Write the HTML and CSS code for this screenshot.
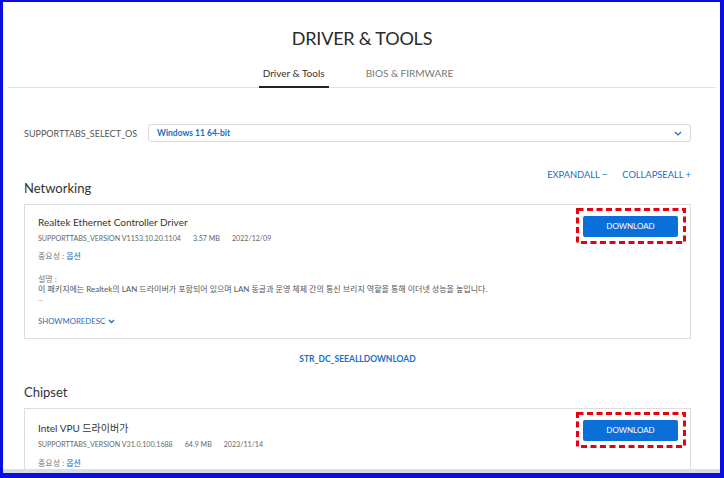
FILE: index.html
```html
<!DOCTYPE html>
<html lang="ko">
<head>
<meta charset="utf-8">
<title>Driver &amp; Tools</title>
<link rel="stylesheet" href="styles.css">
</head>
<body>
<div class="frame">
  <div class="viewport">
    <header class="head">
      <h1 class="title">DRIVER &amp; TOOLS</h1>
      <nav class="tabs">
        <span class="tab active">Driver &amp; Tools</span>
        <span class="tab">BIOS &amp; FIRMWARE</span>
      </nav>
    </header>

    <main class="page">
      <div class="os-row">
        <span class="os-label">SUPPORTTABS_SELECT_OS</span>
        <div class="select">
          <span class="select-value">Windows 11 64-bit</span>
          <svg class="chev" width="8" height="5" viewBox="0 0 8 5"><path d="M1 1l3 3 3-3" fill="none" stroke="#1b6ec2" stroke-width="1.2"/></svg>
        </div>
      </div>

      <div class="expand-row">
        <span class="link">EXPANDALL −</span>
        <span class="link">COLLAPSEALL +</span>
      </div>

      <h2 class="section">Networking</h2>
      <section class="card">
        <div class="card-head">
          <div class="card-info">
            <div class="card-title">Realtek Ethernet Controller Driver</div>
            <div class="meta"><span>SUPPORTTABS_VERSION V1153.10.20.1104</span><span>3.57 MB</span><span>2022/12/09</span></div>
          </div>
          <div class="btn-wrap">
            <span class="btn">DOWNLOAD</span>
            <svg class="mark" width="110" height="36" viewBox="0 0 110 36"><rect x="1.5" y="1.5" width="107" height="33" fill="none" stroke="#e60012" stroke-width="3" stroke-dasharray="6 3.5"/></svg>
          </div>
        </div>
        <div class="imp">중요성 : <span class="opt">옵션</span></div>
        <div class="desc-label">설명 :</div>
        <div class="desc">이 패키지에는 Realtek의 LAN 드라이버가 포함되어 있으며 LAN 동글과 운영 체제 간의 통신 브리지 역할을 통해 이더넷 성능을 높입니다.</div>
        <div class="dots">...</div>
        <div class="more link">SHOWMOREDESC <svg width="7" height="5" viewBox="0 0 7 5"><path d="M1 1l2.5 2.5L6 1" fill="none" stroke="#1b6ec2" stroke-width="1.3"/></svg></div>
      </section>

      <div class="seeall link">STR_DC_SEEALLDOWNLOAD</div>

      <h2 class="section chip">Chipset</h2>
      <section class="card card-2">
        <div class="card-head">
          <div class="card-info">
            <div class="card-title">Intel VPU 드라이버가</div>
            <div class="meta"><span>SUPPORTTABS_VERSION V31.0.100.1688</span><span>64.9 MB</span><span>2023/11/14</span></div>
          </div>
          <div class="btn-wrap">
            <span class="btn">DOWNLOAD</span>
            <svg class="mark" width="110" height="36" viewBox="0 0 110 36"><rect x="1.5" y="1.5" width="107" height="33" fill="none" stroke="#e60012" stroke-width="3" stroke-dasharray="6 3.5"/></svg>
          </div>
        </div>
        <div class="imp">중요성 : <span class="opt">옵션</span></div>
      </section>
    </main>
  </div>
  <div class="hscroll"></div>
</div>
</body>
</html>
```
FILE: styles.css
```css
* { box-sizing: border-box; }
html, body { margin: 0; padding: 0; }
body {
  width: 724px;
  height: 478px;
  overflow: hidden;
  font-family: "Lato", "Noto Sans CJK KR", sans-serif;
  color: #333;
  background: #fff;
}
.frame {
  width: 724px;
  height: 478px;
  border-style: solid;
  border-color: #0a0ee0;
  border-width: 2px 4px 5px 3px;
  display: flex;
  flex-direction: column;
}
.viewport {
  flex: 1;
  overflow: hidden;
  background: #fff;
}
.hscroll {
  height: 4px;
  background: #d6dde6;
}
.head {
  margin: 0 4px 0 5px;
  border-bottom: 1px solid #e2e2e2;
  text-align: center;
}
.title {
  margin: 0;
  padding-top: 25px;
  font-size: 18px;
  line-height: 22px;
  font-weight: 400;
  letter-spacing: -0.2px;
  color: #2b2b2b;
}
.tabs {
  display: flex;
  justify-content: center;
  gap: 33px;
  margin-top: 17px;
  margin-bottom: -1px;
  padding-right: 8px;
}
.tab {
  font-size: 10px;
  line-height: 14px;
  padding: 0 4px 6px;
  color: #777;
  border-bottom: 2px solid transparent;
}
.tab.active {
  color: #333;
  border-bottom-color: #222;
}
.page {
  padding: 0 29px 0 21px;
}
.os-row {
  display: flex;
  align-items: center;
  gap: 11px;
  margin-top: 36px;
}
.os-label {
  font-size: 9px;
  color: #555;
  width: 113px;
}
.select {
  flex: 1;
  height: 18px;
  border: 1px solid #d9d9d9;
  border-radius: 3px;
  display: flex;
  align-items: center;
  justify-content: space-between;
  padding: 0 8px;
}
.select-value {
  font-size: 8.5px;
  font-weight: 700;
  color: #1b6ec2;
}
.link {
  color: #1b6ec2;
}
.expand-row {
  display: flex;
  justify-content: flex-end;
  gap: 15px;
  margin-top: 27px;
  font-size: 9.3px;
  line-height: 11px;
}
.section {
  margin: 0;
  font-size: 13px;
  line-height: 16px;
  font-weight: 400;
  color: #333;
}
.section.chip { margin-top: 19px; }
.card {
  margin-top: 8px;
  border: 1px solid #dedede;
  padding: 10px 12px 12px 13px;
}
.card-head {
  display: flex;
  justify-content: space-between;
  align-items: flex-start;
}
.card-title {
  font-size: 10px;
  line-height: 14px;
  color: #333;
}
.meta {
  display: flex;
  gap: 12px;
  font-size: 7.1px;
  line-height: 10px;
  color: #666;
  margin-top: 5px;
}
.btn-wrap {
  position: relative;
  margin-top: 1px;
}
.btn {
  display: block;
  width: 95px;
  height: 21px;
  line-height: 21px;
  background: #0b6fd9;
  color: #fff;
  text-align: center;
  font-size: 8px;
  border-radius: 2px;
}
.mark {
  position: absolute;
  left: -7px;
  top: -8px;
}
.imp {
  margin-top: 7px;
  font-size: 8px;
  line-height: 10px;
  color: #777;
}
.opt { color: #1b6ec2; }
.desc-label {
  margin-top: 13px;
  font-size: 8px;
  line-height: 10px;
  color: #777;
}
.desc {
  font-size: 8px;
  line-height: 11px;
  color: #555;
}
.dots {
  font-size: 7.5px;
  line-height: 8px;
  color: #999;
}
.more {
  margin-top: 13px;
  font-size: 7.8px;
  line-height: 10px;
  display: flex;
  align-items: center;
  gap: 3px;
}
.seeall {
  margin-top: 14px;
  text-align: center;
  font-size: 8.5px;
  line-height: 12px;
  font-weight: 700;
}
.card-2 { padding-bottom: 30px; }
.card-2 .card-title { padding-top: 2px; line-height: 15px; }
.card-2 .meta { margin-top: 4px; }
.card-2 .imp { margin-top: 8px; }
```
